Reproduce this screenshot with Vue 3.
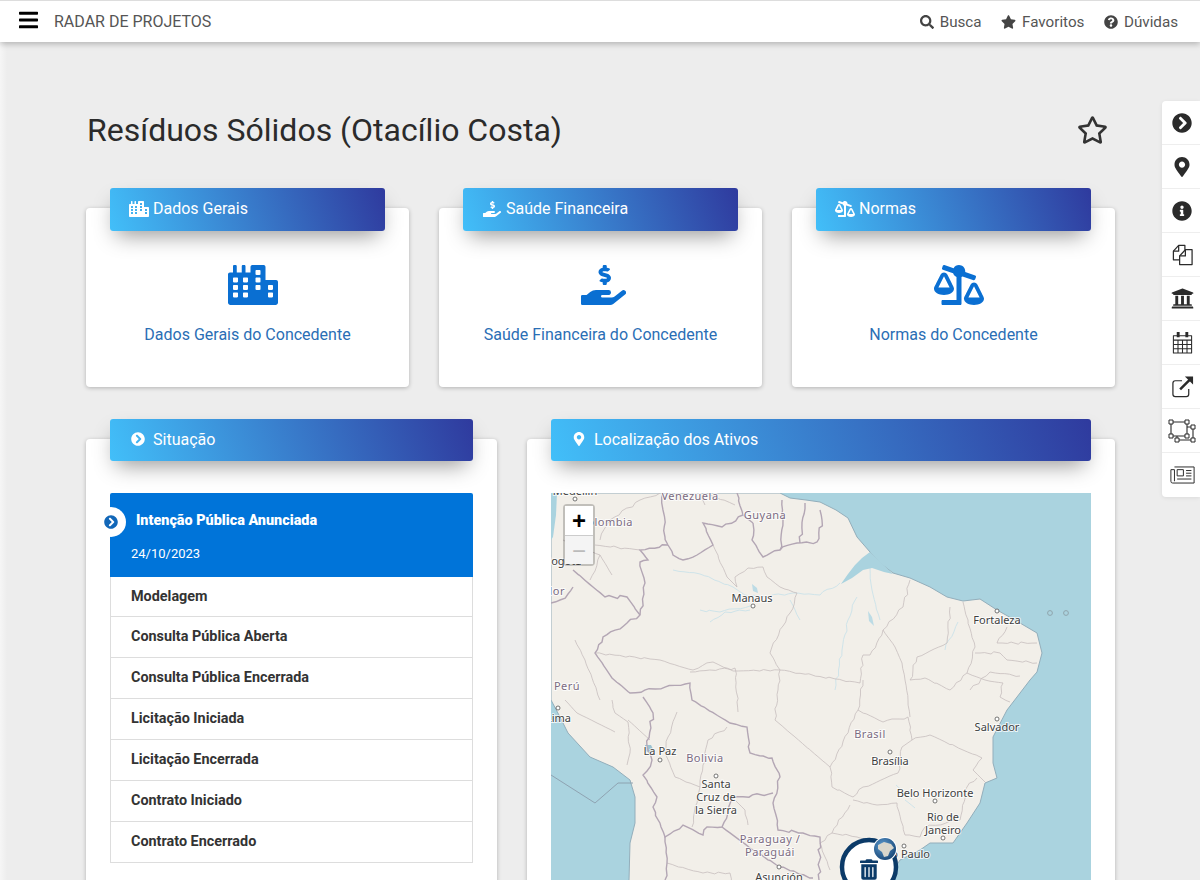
<template>
  <div class="page">
    <header class="topbar">
      <div class="brand">
        <svg class="menu-icon" viewBox="0 0 448 512"><path :d="icons.bars" /></svg>
        <span>RADAR DE PROJETOS</span>
      </div>
      <nav class="topnav">
        <a><svg viewBox="0 0 512 512"><path :d="icons.search" /></svg>Busca</a>
        <a><svg class="wide" viewBox="0 0 576 512"><path :d="icons.star" /></svg>Favoritos</a>
        <a><svg viewBox="0 0 512 512"><path :d="icons.question" /></svg>Dúvidas</a>
      </nav>
    </header>

    <main class="content">
      <div class="title-row">
        <h1>Resíduos Sólidos (Otacílio Costa)</h1>
        <svg class="fav" viewBox="0 0 576 512"><path :d="icons.starOutline" /></svg>
      </div>

      <section class="row-three">
        <article v-for="card in cards" :key="card.title" class="card">
          <div class="bar">
            <svg class="bar-icon" :viewBox="card.box"><g :transform="card.flip"><path :d="card.icon" /></g></svg>
            <span>{{ card.title }}</span>
          </div>
          <div class="card-link">
            <svg class="big-icon" :class="card.shift" :viewBox="card.box"><g :transform="card.flip"><path :d="card.icon" /></g></svg>
            <a>{{ card.link }}</a>
          </div>
        </article>
      </section>

      <section class="row-two">
        <article class="card tall">
          <div class="bar bar-low">
            <svg class="bar-icon round" viewBox="0 0 512 512"><path :d="icons.chevron" /></svg>
            <span>Situação</span>
          </div>
          <ul class="status">
            <li class="active">
              <span class="badge"><svg viewBox="0 0 512 512"><path :d="icons.chevron" /></svg></span>
              <strong>Intenção Pública Anunciada</strong>
              <small>24/10/2023</small>
            </li>
            <li v-for="step in steps" :key="step"><span>{{ step }}</span></li>
          </ul>
        </article>

        <article class="card tall">
          <div class="bar bar-low">
            <svg class="bar-icon round" viewBox="0 0 384 512"><path :d="icons.pin" /></svg>
            <span>Localização dos Ativos</span>
          </div>
          <div class="map">
            <svg class="map-canvas" viewBox="551 493 540 400">
              <defs>
                <radialGradient id="globe" cx="40%" cy="35%" r="75%">
                  <stop offset="0" stop-color="#5c9bd0" />
                  <stop offset="1" stop-color="#123f6e" />
                </radialGradient>
              </defs>
              <rect x="551" y="493" width="540" height="400" fill="#aad3df" />
              <path :d="land" fill="#f2efe9" stroke="#93aebb" stroke-width="1" />
              <path d="M551 493 L557 493 L556 515 L553 537 L551 540 Z" fill="#aad3df" />
              <path
                v-for="(river, i) in rivers"
                :key="'r' + i"
                :d="river"
                fill="none"
                stroke="#cfe4ea"
                stroke-width="1"
              />
              <path d="M870 552 L862 558 L855 565 L848 574 L841 584 L852 578 L863 570 L872 568 L884 572 L893 574 Z" fill="#aad3df" />
              <path d="M645 745 l6 0 l3 6 l-3 2 l-6 -2 Z" fill="#9cc3d2" />
              <path d="M752 584 l5 4 l1 5 l-5 -2 Z" fill="#bcdbe5" />
              <path d="M868 611 l4 6 l2 9 l-5 -5 Z" fill="#bcdbe5" />
              <path
                v-for="(line, i) in stateLines"
                :key="'s' + i"
                :d="line"
                fill="none"
                stroke="#c6bebe"
                stroke-width="0.8"
              />
              <path
                v-for="(line, i) in borders"
                :key="'b' + i"
                :d="line"
                fill="none"
                stroke="#b3a6b4"
                stroke-width="1.4"
              />
              <path d="M551 775 L595 803 L618 783 L633 783" fill="none" stroke="#8b9dac" stroke-width="0.9" />
              <circle cx="1050" cy="613" r="2.4" fill="none" stroke="#8fa5ad" />
              <circle cx="1066" cy="613" r="2.4" fill="none" stroke="#8fa5ad" />
              <circle
                v-for="dot in dots"
                :key="dot[0] + '-' + dot[1]"
                :cx="dot[0]"
                :cy="dot[1]"
                r="2"
                fill="#fff"
                stroke="#555"
                stroke-width="0.8"
              />
              <text
                v-for="label in labels"
                :key="label.t + label.y"
                class="map-label"
                :class="{ country: label.c }"
                :x="label.x"
                :y="label.y"
                :text-anchor="label.a || 'middle'"
              >{{ label.t }}</text>
              <circle cx="869" cy="867" r="27" fill="#fff" stroke="#0b3a68" stroke-width="4.5" />
              <svg x="860" y="859" width="18" height="21" viewBox="0 0 448 512">
                <path :d="icons.trash" fill="#0b3a68" />
              </svg>
              <circle cx="885" cy="849" r="12" fill="#fff" />
              <circle cx="885" cy="849" r="11" fill="url(#globe)" />
              <path d="M878 845 l6 -3 l7 2 l3 4 l-4 3 l-2 5 l-4 1 l-2 -5 l-4 -3 Z" fill="#d8d6cc" />
            </svg>
            <div class="zoom-control">
              <button>+</button>
              <button class="off">−</button>
            </div>
          </div>
        </article>
      </section>
    </main>

    <aside class="side-tools">
      <a><svg viewBox="0 0 512 512"><path :d="icons.chevron" /></svg></a>
      <a><svg viewBox="0 0 384 512"><path :d="icons.pin" /></svg></a>
      <a><svg viewBox="0 0 512 512"><path :d="icons.info" /></svg></a>
      <a class="wider">
        <svg viewBox="0 0 24 24" class="line">
          <path d="M8.500 17.500H2.500V8.500L8 2.500H14.500V7" />
          <path d="M8 2.500V8.500H2.500" />
          <path d="M9 13.500L15 7H22V22.500H9Z" />
          <path d="M15 7V13.500H9" />
        </svg>
      </a>
      <a class="wider"><svg viewBox="0 0 512 512"><path :d="icons.bank" /></svg></a>
      <a class="wider">
        <svg viewBox="0 0 24 24" class="line thin">
          <path d="M2.500 5H21.500V23H2.500Z" />
          <path d="M2.500 9.500H21.500M2.500 14H21.500M2.500 18.500H21.500M7.300 9.500V23M12 9.500V23M16.700 9.500V23" />
          <path class="solid" d="M6 1H9V6.500H6ZM15 1H18V6.500H15Z" />
        </svg>
      </a>
      <a class="wider">
        <svg viewBox="0 0 24 24" class="line">
          <path d="M11.500 6H4.500A2.500 2.500 0 0 0 2 8.500V20A2.500 2.500 0 0 0 4.500 22.500H16A2.500 2.500 0 0 0 18.500 20V14.500" />
          <path d="M9.500 15L20 4.500" stroke-width="2.600" />
          <path d="M14.500 1.500H23V10Z" class="solid" />
        </svg>
      </a>
      <a class="widest">
        <svg viewBox="0 0 28 24" class="line thin">
          <path d="M3 3H19M3 3V17M19 3V17M3 17H19M9 21H25M25 8V21M9 17V21M19 8H25" />
          <path class="solid white" d="M1 1H5V5H1ZM17 1H21V5H17ZM1 15H5V19H1ZM17 15H21V19H17ZM7 19H11V23H7ZM23 19H27V23H23ZM23 6H27V10H23Z" />
        </svg>
      </a>
      <a class="paper">
        <svg viewBox="0 0 28 22" class="line thin">
          <path d="M5 2H27V20H3A2 2 0 0 1 1 18V5H5V18" />
          <path d="M8 5H15V12H8Z" />
          <path d="M18 6H24M18 9H24M18 12H24M8 15.500H24" />
        </svg>
      </a>
    </aside>
  </div>
</template>

<script setup>
const icons = {
  bars: 'M16 132h416c8.837 0 16-7.163 16-16V76c0-8.837-7.163-16-16-16H16C7.163 60 0 67.163 0 76v40c0 8.837 7.163 16 16 16zm0 160h416c8.837 0 16-7.163 16-16v-40c0-8.837-7.163-16-16-16H16c-8.837 0-16 7.163-16 16v40c0 8.837 7.163 16 16 16zm0 160h416c8.837 0 16-7.163 16-16v-40c0-8.837-7.163-16-16-16H16c-8.837 0-16 7.163-16 16v40c0 8.837 7.163 16 16 16z',
  search: 'M505 442.7L405.3 343c-4.5-4.5-10.6-7-17-7H372c27.6-35.3 44-79.7 44-128C416 93.1 322.9 0 208 0S0 93.1 0 208s93.1 208 208 208c48.3 0 92.7-16.4 128-44v16.3c0 6.4 2.5 12.5 7 17l99.7 99.7c9.4 9.4 24.6 9.4 33.9 0l28.3-28.3c9.4-9.4 9.4-24.6.1-34zM208 336c-70.7 0-128-57.2-128-128 0-70.7 57.2-128 128-128 70.7 0 128 57.2 128 128 0 70.7-57.2 128-128 128z',
  star: 'M259.3 17.8L194 150.2 47.9 171.5c-26.2 3.8-36.7 36.1-17.7 54.6l105.7 103-25 145.5c-4.5 26.3 23.2 46 46.4 33.7L288 439.6l130.7 68.7c23.2 12.2 50.9-7.4 46.4-33.7l-25-145.5 105.7-103c19-18.5 8.5-50.8-17.7-54.6L382 150.2 316.7 17.8c-11.7-23.6-45.6-23.9-57.4 0z',
  starOutline: 'M528.1 171.5L382 150.2 316.7 17.8c-11.7-23.6-45.6-23.9-57.4 0L194 150.2 47.9 171.5c-26.2 3.8-36.7 36.1-17.7 54.6l105.7 103-25 145.5c-4.5 26.3 23.2 46 46.4 33.7L288 439.6l130.7 68.7c23.2 12.2 50.9-7.4 46.4-33.7l-25-145.5 105.7-103c19-18.5 8.5-50.8-17.7-54.6zM388.6 312.3l23.7 138.4L288 385.4l-124.3 65.3 23.7-138.4-100.6-98 139-20.2 62.2-126 62.2 126 139 20.2-100.6 98z',
  question: 'M504 256c0 136.997-111.043 248-248 248S8 392.997 8 256C8 119.083 119.043 8 256 8s248 111.083 248 248zM262.655 90c-54.497 0-89.255 22.957-116.549 63.758-3.536 5.286-2.353 12.415 2.715 16.258l34.699 26.31c5.205 3.947 12.621 3.008 16.665-2.122 17.864-22.658 30.113-35.797 57.303-35.797 20.429 0 45.698 13.148 45.698 32.958 0 14.976-12.363 22.667-32.534 33.976C247.128 238.528 216 254.941 216 296v4c0 6.627 5.373 12 12 12h56c6.627 0 12-5.373 12-12v-1.333c0-28.462 83.186-29.647 83.186-106.667 0-58.002-60.165-102-116.531-102zM256 338c-25.365 0-46 20.635-46 46 0 25.364 20.635 46 46 46s46-20.636 46-46c0-25.365-20.635-46-46-46z',
  chevron: 'M256 8c137 0 248 111 248 248S393 504 256 504 8 393 8 256 119 8 256 8zm113.9 231L234.4 103.5c-9.4-9.4-24.6-9.4-33.9 0l-17 17c-9.4 9.4-9.4 24.6 0 33.9L285.1 256 183.5 357.6c-9.4 9.4-9.4 24.6 0 33.9l17 17c9.4 9.4 24.6 9.4 33.9 0L369.9 273c9.4-9.4 9.4-24.6 0-34z',
  pin: 'M172.268 501.67C26.97 291.031 0 268.413 0 192 0 85.961 85.961 0 192 0s192 85.961 192 192c0 76.413-26.97 99.031-172.268 309.67-9.535 13.774-29.93 13.773-39.464 0zM192 272c44.183 0 80-35.817 80-80s-35.817-80-80-80-80 35.817-80 80 35.817 80 80 80z',
  info: 'M256 8C119.043 8 8 119.083 8 256c0 136.997 111.043 248 248 248s248-111.003 248-248C504 119.083 392.957 8 256 8zm0 110c23.196 0 42 18.804 42 42s-18.804 42-42 42-42-18.804-42-42 18.804-42 42-42zm56 254c0 6.627-5.373 12-12 12h-88c-6.627 0-12-5.373-12-12v-24c0-6.627 5.373-12 12-12h12v-64h-12c-6.627 0-12-5.373-12-12v-24c0-6.627 5.373-12 12-12h64c6.627 0 12 5.373 12 12v100h12c6.627 0 12 5.373 12 12v24z',
  bank: 'M496 128v16a8 8 0 0 1-8 8h-24v12c0 6.627-5.373 12-12 12H60c-6.627 0-12-5.373-12-12v-12H24a8 8 0 0 1-8-8v-16a8 8 0 0 1 4.941-7.392l232-88a7.996 7.996 0 0 1 6.118 0l232 88A8 8 0 0 1 496 128zm-24 304H40c-13.255 0-24 10.745-24 24v16a8 8 0 0 0 8 8h464a8 8 0 0 0 8-8v-16c0-13.255-10.745-24-24-24zM96 192v192H60c-6.627 0-12 5.373-12 12v20h416v-20c0-6.627-5.373-12-12-12h-36V192h-64v192h-64V192h-64v192h-64V192H96z',
  trash: 'M32 464a48 48 0 0 0 48 48h288a48 48 0 0 0 48-48V128H32zm272-256a16 16 0 0 1 32 0v224a16 16 0 0 1-32 0zm-96 0a16 16 0 0 1 32 0v224a16 16 0 0 1-32 0zm-96 0a16 16 0 0 1 32 0v224a16 16 0 0 1-32 0zM432 32H312l-9.4-18.7A24 24 0 0 0 281.1 0H166.8a23.72 23.72 0 0 0-21.4 13.3L136 32H16A16 16 0 0 0 0 48v32a16 16 0 0 0 16 16h416a16 16 0 0 0 16-16V48a16 16 0 0 0-16-16z',
  city: 'M616 192H480V24c0-13.26-10.75-24-24-24H312c-13.25 0-24 10.74-24 24v72h-64V16c0-8.84-7.16-16-16-16h-16c-8.84 0-16 7.16-16 16v80h-64V16c0-8.84-7.16-16-16-16H80c-8.84 0-16 7.16-16 16v80H24c-13.25 0-24 10.74-24 24v360c0 17.67 14.33 32 32 32h576c17.67 0 32-14.33 32-32V216c0-13.26-10.75-24-24-24zM128 404c0 6.63-5.37 12-12 12H76c-6.63 0-12-5.37-12-12v-40c0-6.63 5.37-12 12-12h40c6.63 0 12 5.37 12 12v40zm0-96c0 6.63-5.37 12-12 12H76c-6.63 0-12-5.37-12-12v-40c0-6.63 5.37-12 12-12h40c6.63 0 12 5.37 12 12v40zm0-96c0 6.63-5.37 12-12 12H76c-6.63 0-12-5.37-12-12v-40c0-6.63 5.37-12 12-12h40c6.63 0 12 5.37 12 12v40zm128 192c0 6.63-5.37 12-12 12h-40c-6.63 0-12-5.37-12-12v-40c0-6.63 5.37-12 12-12h40c6.63 0 12 5.37 12 12v40zm0-96c0 6.63-5.37 12-12 12h-40c-6.63 0-12-5.37-12-12v-40c0-6.63 5.37-12 12-12h40c6.63 0 12 5.37 12 12v40zm0-96c0 6.63-5.37 12-12 12h-40c-6.63 0-12-5.37-12-12v-40c0-6.63 5.37-12 12-12h40c6.63 0 12 5.37 12 12v40zm160 96c0 6.63-5.37 12-12 12h-40c-6.63 0-12-5.37-12-12v-40c0-6.63 5.37-12 12-12h40c6.63 0 12 5.37 12 12v40zm0-96c0 6.63-5.37 12-12 12h-40c-6.63 0-12-5.37-12-12v-40c0-6.63 5.37-12 12-12h40c6.63 0 12 5.37 12 12v40zm0-96c0 6.63-5.37 12-12 12h-40c-6.63 0-12-5.37-12-12V76c0-6.63 5.37-12 12-12h40c6.63 0 12 5.37 12 12v40zm160 288c0 6.63-5.37 12-12 12h-40c-6.63 0-12-5.37-12-12v-40c0-6.63 5.37-12 12-12h40c6.63 0 12 5.37 12 12v40zm0-96c0 6.63-5.37 12-12 12h-40c-6.63 0-12-5.37-12-12v-40c0-6.63 5.37-12 12-12h40c6.63 0 12 5.37 12 12v40z',
  hand: 'M271.06,144.3l54.27,14.3a8.59,8.59,0,0,1,6.63,8.1c0,4.6-4.09,8.4-9.12,8.4h-35.6a30,30,0,0,1-11.19-2.2c-5.24-2.2-11.28-1.7-15.3,2l-19,17.5a11.68,11.68,0,0,0-2.25,2.66,11.42,11.42,0,0,0,3.88,15.74,83.77,83.77,0,0,0,34.51,11.5V240c0,8.8,7.83,16,17.37,16h17.37c9.55,0,17.38-7.2,17.38-16V222.4c32.93-3.6,57.84-31,53.5-63-3.15-23-22.46-41.3-46.56-47.7L282.68,97.4a8.59,8.59,0,0,1-6.63-8.1c0-4.6,4.09-8.4,9.12-8.4h35.6A30,30,0,0,1,332,83.1c5.23,2.2,11.28,1.7,15.3-2l19-17.5A11.31,11.31,0,0,0,368.47,61a11.43,11.43,0,0,0-3.84-15.78,83.82,83.82,0,0,0-34.52-11.5V16c0-8.8-7.82-16-17.37-16H295.37C285.82,0,278,7.2,278,16V33.6c-32.89,3.6-57.85,31-53.51,63C227.63,119.6,247,137.9,271.06,144.3ZM565.27,328.1c-11.8-10.7-30.2-10-42.6,0L430.27,402a63.64,63.64,0,0,1-40,14H272a16,16,0,0,1,0-32h78.29c15.9,0,30.71-10.9,33.25-26.6a31.2,31.2,0,0,0,.46-5.46A32,32,0,0,0,352,320H192a117.66,117.66,0,0,0-74.1,26.29L71.4,384H16A16,16,0,0,0,0,400v96a16,16,0,0,0,16,16H372.77a64,64,0,0,0,40-14L564,377a32,32,0,0,0,1.28-48.9Z',
  scale: 'M528 448H352V153.25c20.42-8.94 36.1-26.22 43.38-47.47l132-44.26c8.38-2.81 12.89-11.88 10.08-20.26l-10.17-30.34C524.48 2.54 515.41-1.97 507.03.84L389.11 40.37C375.3 16.36 349.69 0 320 0c-44.18 0-80 35.82-80 80 0 3.43.59 6.71 1.01 10.03l-128.39 43.05c-8.38 2.81-12.89 11.88-10.08 20.26l10.17 30.34c2.81 8.38 11.88 12.89 20.26 10.08l142.05-47.63c4.07 2.77 8.43 5.12 12.99 7.12V496c0 8.84 7.16 16 16 16h224c8.84 0 16-7.16 16-16v-32c-.01-8.84-7.17-16-16.01-16zm111.98-144c0-16.18 1.34-8.73-85.05-181.51-17.65-35.29-68.19-35.36-85.87 0-87.12 174.26-85.04 165.84-85.04 181.51H384c0 44.18 57.31 80 128 80s128-35.82 128-80h-.02zM440 288l72-144 72 144H440zm-269.07-37.51c-17.65-35.29-68.19-35.36-85.87 0C-2.06 424.75.02 416.33.02 432H0c0 44.18 57.31 80 128 80s128-35.82 128-80h-.02c0-16.18 1.34-8.73-85.05-181.51zM56 416l72-144 72 144H56z',
}

const cards = [
  { title: 'Dados Gerais', link: 'Dados Gerais do Concedente', icon: icons.city, box: '0 0 640 512', shift: 'shift-lg' },
  { title: 'Saúde Financeira', link: 'Saúde Financeira do Concedente', icon: icons.hand, box: '0 0 576 512', shift: 'shift-sm' },
  { title: 'Normas', link: 'Normas do Concedente', icon: icons.scale, box: '0 0 640 512', flip: 'translate(640 0) scale(-1 1)', shift: 'shift-lg' },
]

const steps = [
  'Modelagem',
  'Consulta Pública Aberta',
  'Consulta Pública Encerrada',
  'Licitação Iniciada',
  'Licitação Encerrada',
  'Contrato Iniciado',
  'Contrato Encerrado',
]

// roughens a hand-traced polyline so it reads like a real boundary
const wiggle = (d, amp = 1.3) =>
  d
    .split('M')
    .filter(Boolean)
    .map((part) => {
      const nums = part.match(/-?[\d.]+/g).map(Number)
      let out = `M${nums[0]} ${nums[1]}`
      for (let i = 2; i < nums.length; i += 2) {
        const [x0, y0, x1, y1] = [nums[i - 2], nums[i - 1], nums[i], nums[i + 1]]
        const len = Math.hypot(x1 - x0, y1 - y0)
        const count = Math.max(1, Math.round(len / 5))
        for (let s = 1; s < count; s++) {
          const t = s / count
          const x = x0 + (x1 - x0) * t
          const y = y0 + (y1 - y0) * t
          const n = Math.sin(x * 1.7 + y * 0.9) + Math.sin(x * 0.6 - y * 2.1)
          out += ` L${(x + n * amp * 0.6).toFixed(1)} ${(y + n * amp * 0.6).toFixed(1)}`
        }
        out += ` L${x1} ${y1}`
      }
      return out
    })
    .join(' ')

// map data is in page coordinates, the svg viewBox starts at the map corner
const land =
  'M557 493 L780 493 L790 498 L806 500 L820 502 L836 510 L848 518 L857 537 L870 552 L880 563 L893 573 L910 578 L930 587 L947 597 L963 601 L980 599 L997 610 L1020 623 L1037 633 L1042 653 L1037 672 L1030 680 L1017 697 L1007 710 L993 737 L993 763 L997 778 L985 783 L980 803 L967 823 L953 843 L930 843 L920 850 L900 860 L887 880 L880 893 L629 893 L629 880 L630 843 L635 823 L635 797 L630 780 L613 767 L590 757 L568 733 L560 717 L551 700 L551 493 Z'

const borders = [
  'M663 493 L663 510 L665 537 L668 545 L673 555 L683 560 L697 555 L713 545 L703 523 L722 527 L743 515 L737 493',
  'M668 545 L640 550 L648 560 L640 562 L645 583 L640 615 L627 623 L603 637 L595 653 L612 678 L630 693 L690 683 L692 700 L730 723 L747 727 L750 753 L772 758 L780 777 L773 803 L778 830 L803 833 L820 837 L819 880',
  'M573 570 L593 587 L605 597 L627 597 L640 615',
  'M551 603 L560 600 L568 594 L573 587',
  'M753 523 L752 540 L763 557 L780 550 L797 543 L817 542 L822 520 L820 510',
  'M743 515 L753 523 M780 550 L783 520 L782 500 M800 543 L805 503',
  'M643 697 L653 713 L647 747 L652 760 L643 775 L657 797 L653 807 L665 837 L683 825 L703 835 L707 827 L722 827 L733 798 L773 793',
  'M722 827 L753 850 L780 867 L813 878',
  'M665 837 L667 863 L665 880',
].map((d) => wiggle(d))

const stateLines = [
  'M713 545 L727 577 L737 587 L735 577 L748 568 L763 567 L767 577 L780 587 L797 593',
  'M797 593 L790 613 L770 653 L780 670 L733 671 L713 662 L693 670 L660 660 L595 653',
  'M690 672 L735 668 L738 712 M780 670 L860 683 L863 655',
  'M910 580 L903 607 L883 630 L895 647 L902 663 L905 680 L908 700 L910 717 M883 630 L870 655 L863 655',
  'M963 602 L968 620 L975 647 L967 673 L950 690 L925 678 L910 680',
  'M950 607 L947 643 L917 657 L910 680 M1007 627 L997 643 L1037 643 M975 653 L1000 653 L1007 660 L1037 663',
  'M1003 683 L1000 697 L1010 702 M967 673 L985 680 L1003 683 M970 690 L990 672 L1020 676',
  'M863 680 L858 710 L883 722 L908 717 L912 740 L930 735 L963 750 L982 758 L973 770 L985 782',
  'M912 740 L902 747 L898 773 L863 787 L853 797 L832 787 L830 767 L858 710',
  'M853 800 L877 805 L897 803 L905 835 L920 837 L925 827 L960 820 L967 787 L977 778',
  'M850 805 L832 833 L820 843 M832 833 L857 837 L875 840',
  'M780 670 L775 720 L830 767 M820 843 L830 870',
  'M565 700 L577 713 L597 723 L615 732 M612 700 L615 713 L628 722 L630 753 L627 765 M628 720 L650 740',
  'M668 737 L677 712 M668 737 L665 753 L675 777 L700 787 L695 807 L692 827 M708 740 L727 727 M708 740 L703 765 L700 787',
  'M733 798 L745 810 L748 825 M563 540 L600 555 L612 575 M595 545 L640 550 M600 555 L590 580',
  'M575 640 L585 660 L600 700 M667 863 L703 873 L730 873 L732 893',
  'M660 493 L640 500 L610 520 L600 540 M700 493 L705 505 M710 495 L735 505',
].map((d) => wiggle(d, 1))

const rivers = [
  'M673 570 L700 574 L733 587 L745 595 L760 597 L793 593 L820 595 L840 583',
  'M700 610 L720 612 L750 606 M710 622 L725 612 L750 610',
  'M857 597 L848 620 L842 650 L835 690',
  'M790 600 L800 620 M870 568 L872 590 L880 620',
  'M896 785 L912 800 M905 800 L915 808 M958 622 L945 650',
].map((d) => wiggle(d, 1))

const dots = [
  [575, 499], [753, 606], [997, 611], [558, 708], [660, 760], [716, 776],
  [779, 867], [890, 752], [997, 719], [935, 801], [943, 838], [904, 846],
]

const labels = [
  { t: 'Medellín', x: 575, y: 495 },
  { t: 'Venezuela', x: 690, y: 500, c: true },
  { t: 'Guyana', x: 765, y: 519, c: true },
  { t: 'Colombia', x: 633, y: 526, a: 'end', c: true },
  { t: 'Bogotá', x: 544, y: 565, a: 'start' },
  { t: 'Ecuador', x: 565, y: 595, a: 'end', c: true },
  { t: 'Manaus', x: 752, y: 602 },
  { t: 'Fortaleza', x: 997, y: 624 },
  { t: 'Perú', x: 567, y: 690, c: true },
  { t: 'Lima', x: 571, y: 722, a: 'end' },
  { t: 'La Paz', x: 660, y: 755 },
  { t: 'Bolivia', x: 705, y: 762, c: true },
  { t: 'Santa', x: 716, y: 788 },
  { t: 'Cruz de', x: 716, y: 801 },
  { t: 'la Sierra', x: 716, y: 814 },
  { t: 'Paraguay /', x: 770, y: 843, c: true },
  { t: 'Paraguái', x: 770, y: 856, c: true },
  { t: 'Asunción', x: 779, y: 881 },
  { t: 'Brasil', x: 870, y: 738, c: true },
  { t: 'Brasília', x: 890, y: 765 },
  { t: 'Salvador', x: 997, y: 731 },
  { t: 'Belo Horizonte', x: 935, y: 797 },
  { t: 'Rio de', x: 943, y: 821 },
  { t: 'Janeiro', x: 943, y: 834 },
  { t: 'São Paulo', x: 930, y: 858, a: 'end' },
]
</script>

<style>
html,
body {
  margin: 0;
  height: 880px;
  overflow: hidden;
}
</style>

<style scoped>
.page {
  position: relative;
  height: 880px;
  overflow: hidden;
  background: linear-gradient(90deg, #f6f6f6, #ededed 7px);
  font-family: Roboto, sans-serif;
  color: #333;
}

.topbar {
  height: 41px;
  border-top: 1px solid #ddd;
  background: #fff;
  box-shadow: 0 2px 6px rgba(0, 0, 0, 0.25);
  display: flex;
  justify-content: space-between;
  align-items: center;
  padding: 0 22px 0 19px;
}

.brand {
  display: flex;
  align-items: center;
  gap: 16px;
  font-size: 16px;
  color: #555;
}
.menu-icon {
  width: 19px;
  height: 22px;
  fill: #000;
  margin-top: -3px;
}

.topnav {
  display: flex;
  gap: 19.5px;
  font-size: 15.2px;
  color: #555;
}
.topnav a {
  display: flex;
  align-items: center;
  gap: 6px;
}
.topnav svg {
  width: 14px;
  height: 14px;
  fill: #444;
}
.topnav svg.wide {
  width: 15px;
}

.content {
  padding: 0 85px 0 86px;
}

.title-row {
  height: 44px;
  padding-top: 66px;
  margin-bottom: 56px;
  display: flex;
  justify-content: space-between;
  align-items: center;
}
h1 {
  margin: 0;
  padding-left: 1px;
  font-size: 32px;
  font-weight: 400;
  color: #2b2b2b;
}
.fav {
  width: 31px;
  height: 30px;
  margin-right: 7px;
  margin-top: -1px;
  fill: #333;
}

.row-three {
  display: grid;
  grid-template-columns: repeat(3, 323px);
  gap: 30px;
  margin-bottom: 52px;
}
.row-two {
  display: grid;
  grid-template-columns: 411px 588px;
  gap: 30px;
}

.card {
  background: #fff;
  border-radius: 4px;
  box-shadow: 0 1px 4px rgba(0, 0, 0, 0.25);
  padding: 0 24px;
  height: 179px;
}
.card.tall {
  height: 480px;
}

.bar {
  height: 43px;
  position: relative;
  top: -20px;
  box-sizing: border-box;
  padding: 0 0 2px 19px;
  border-radius: 3px;
  background: linear-gradient(70deg, #42bff9, #2f3a9e);
  box-shadow: 0 10px 22px -6px rgba(0, 0, 0, 0.42);
  display: flex;
  align-items: center;
  gap: 4px;
  font-size: 16px;
  color: #fff;
}
.bar-low {
  height: 42px;
  gap: 8px;
  padding-left: 21px;
}
.bar-icon {
  width: 20px;
  height: 16px;
  fill: #fff;
}
.bar-icon.round {
  width: 14px;
  height: 14px;
}

.card-link {
  display: flex;
  flex-direction: column;
  align-items: center;
  gap: 20px;
  margin-top: 14px;
  font-size: 16px;
}
.card-link a {
  color: #2a6eb5;
}
.big-icon {
  height: 40px;
  fill: #0a6fd2;
}
.big-icon.shift-lg {
  margin-left: 10px;
}
.big-icon.shift-sm {
  margin-left: 6px;
}

.status {
  list-style: none;
  margin: 12px 0 0;
  padding: 0;
  font-size: 14.4px;
  font-weight: 700;
  color: #333;
}
.status li {
  height: 40px;
  box-sizing: border-box;
  border: 1px solid #ddd;
  border-top: 0;
  padding-left: 20px;
  display: flex;
  align-items: center;
}
.status li + li + li {
  height: 41px;
  padding-bottom: 2px;
}
.status li.active {
  position: relative;
  height: 84px;
  border: 0;
  border-radius: 2px 2px 0 0;
  padding: 18px 0 0 21px;
  background: #0074d9;
  color: #fff;
  flex-direction: column;
  align-items: flex-start;
}
.active strong {
  line-height: 20px;
  padding-left: 5px;
}
.active small {
  font-size: 13px;
  font-weight: 400;
  line-height: 20px;
  margin-top: 13px;
}
.badge {
  position: absolute;
  left: -14px;
  top: 14px;
  width: 30px;
  height: 30px;
  border-radius: 50%;
  background: #fff;
  display: flex;
  align-items: center;
  justify-content: center;
}
.badge svg {
  width: 14px;
  height: 14px;
  fill: #1267b8;
}

.map {
  position: relative;
  height: 420px;
  margin-top: 12px;
  overflow: hidden;
}
.map-canvas {
  display: block;
  width: 540px;
  height: 400px;
}
.map-label {
  font-family: "Noto Sans", sans-serif;
  font-size: 11px;
  fill: #3f3f3f;
  paint-order: stroke;
  stroke: rgba(255, 255, 255, 0.75);
  stroke-width: 2px;
}
.map-label.country {
  fill: #7c6b82;
  letter-spacing: 0.5px;
}
.zoom-control {
  position: absolute;
  left: 12px;
  top: 11px;
  width: 28px;
  border: 2px solid rgba(0, 0, 0, 0.2);
  border-radius: 4px;
  background-clip: padding-box;
}
.zoom-control button {
  display: block;
  width: 28px;
  height: 29px;
  padding: 0;
  border: 0;
  background: #fff;
  font-family: "Liberation Sans", sans-serif;
  font-size: 24px;
  font-weight: 700;
  line-height: 27px;
  color: #000;
}
.zoom-control button.off {
  background: #f4f4f4;
  color: #bbb;
  font-weight: 400;
  border-top: 1px solid #ccc;
}

.side-tools {
  position: absolute;
  right: 0;
  top: 101px;
  width: 38px;
  background: #fff;
  border-radius: 4px 0 0 4px;
  box-shadow: 0 1px 4px rgba(0, 0, 0, 0.08);
}
.side-tools a {
  height: 44px;
  box-sizing: border-box;
  padding-left: 2px;
  border-bottom: 1px solid #eee;
  display: flex;
  align-items: center;
  justify-content: center;
}
.side-tools a:last-child {
  border-bottom: 0;
}
.side-tools svg {
  width: 20px;
  height: 20px;
  fill: #2b2b2b;
}
.side-tools a.wider svg {
  width: 23px;
  height: 23px;
}
.side-tools a.widest svg {
  width: 28px;
  height: 24px;
}
.side-tools a.paper svg {
  width: 25px;
  height: 20px;
}
.side-tools svg.line {
  fill: none;
  stroke: #2b2b2b;
  stroke-width: 1.3;
  stroke-linejoin: round;
}
.side-tools svg.line.thin {
  stroke-width: 1.1;
}
.side-tools svg.line .solid {
  fill: #2b2b2b;
  stroke: none;
}
.side-tools svg.line .solid.white {
  fill: #fff;
  stroke: #2b2b2b;
  stroke-width: 1;
}
</style>
